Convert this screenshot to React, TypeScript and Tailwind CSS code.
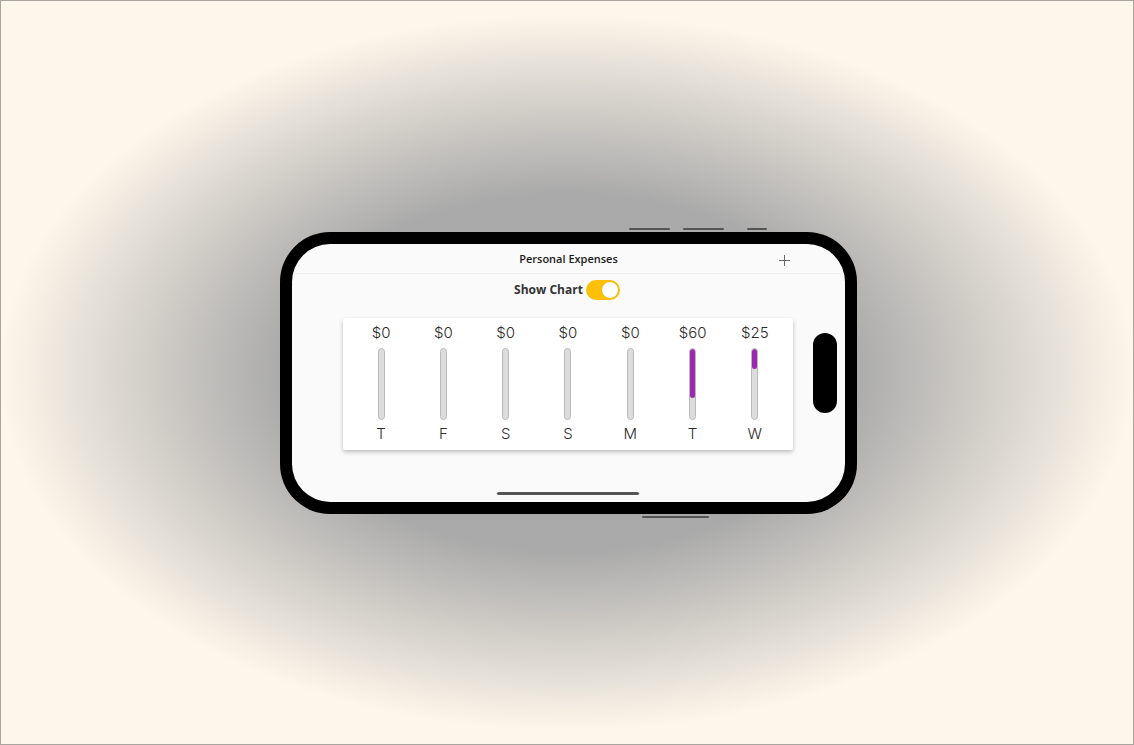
import React from 'react';

type Day = { label: string; amount: number };

const days: Day[] = [
  { label: 'T', amount: 0 },
  { label: 'F', amount: 0 },
  { label: 'S', amount: 0 },
  { label: 'S', amount: 0 },
  { label: 'M', amount: 0 },
  { label: 'T', amount: 60 },
  { label: 'W', amount: 25 },
];

const total = days.reduce((s, d) => s + d.amount, 0);

const ChartBar = ({ day }: { day: Day }) => {
  const pct = total === 0 ? 0 : (day.amount / total) * 100;
  return (
    <div className="flex flex-col items-center">
      <span className="text-[15px] leading-[17px] text-[#2b2b2b] font-['Inter',sans-serif] font-[350]">${day.amount}</span>
      <div className="mt-[7px] w-[7px] h-[72px] rounded-full border border-[#b9b9b9] bg-[#dcdcdc] relative overflow-hidden">
        <div className="absolute left-0 right-0 top-0 bg-[#9c27b0] rounded-full" style={{ height: `${pct}%` }} />
      </div>
      <span className="mt-[5px] text-[15px] leading-[17px] text-[#2b2b2b] font-['Inter',sans-serif] font-[350]">{day.label}</span>
    </div>
  );
};

export default function App() {
  return (
    <div className="w-[1134px] h-[745px] border border-[#a9a6a0] bg-[#fdf6ea] bg-[radial-gradient(ellipse_567px_358px_at_center,#aaaaaa_50%,#fdf6ea_100%)] flex items-center justify-center overflow-hidden">
      {/* phone */}
      <div className="relative ml-[3px] w-[577px] h-[282px] rounded-[50px] bg-black p-[12px]">
        {/* side buttons */}
        <div className="absolute top-[-4px] left-[349px] w-[41px] h-[2px] rounded bg-[#555]" />
        <div className="absolute top-[-4px] left-[403px] w-[41px] h-[2px] rounded bg-[#555]" />
        <div className="absolute top-[-4px] left-[467px] w-[20px] h-[2px] rounded bg-[#555]" />
        <div className="absolute bottom-[-4px] left-[362px] w-[67px] h-[2px] rounded bg-[#555]" />

        {/* screen */}
        <div className="relative w-full h-full rounded-[38px] bg-[#fafafa] overflow-hidden flex flex-col font-['Open_Sans',sans-serif]">
          <div className="h-[30px] shrink-0 flex items-center justify-center border-b border-[#efefef] relative">
            <span className="text-[11px] font-semibold text-[#1c1c1c] mt-[2px]">Personal Expenses</span>
            <svg className="absolute right-[54px] top-[10px]" width="13" height="13" viewBox="0 0 13 13" fill="none" stroke="#666" strokeWidth="1">
              <path d="M6.5 1v11M1 6.5h11" />
            </svg>
          </div>

          <div className="flex items-center justify-center gap-[3px] mt-[6px] -ml-[3px]">
            <span className="text-[12px] font-bold text-[#333]">Show Chart</span>
            <div className="w-[34px] h-[20px] rounded-full bg-[#ffc107] relative">
              <div className="absolute right-[1px] top-[1px] w-[18px] h-[18px] rounded-full bg-white border border-[#f2b400]" />
            </div>
          </div>

          <div className="ml-[51px] mr-[52px] mt-[18px] h-[132px] bg-white rounded-[2px] shadow-[0_2px_4px_rgba(0,0,0,0.25)] px-[7px] pt-[6px] grid grid-cols-7">
            {days.map((d, i) => (
              <ChartBar key={i} day={d} />
            ))}
          </div>

          {/* dynamic island */}
          <div className="absolute right-[8px] top-[89px] w-[24px] h-[80px] rounded-full bg-black" />
          {/* home indicator */}
          <div className="absolute bottom-[7px] left-[205px] w-[142px] h-[3px] rounded-full bg-[#555]" />
        </div>
      </div>
    </div>
  );
}
